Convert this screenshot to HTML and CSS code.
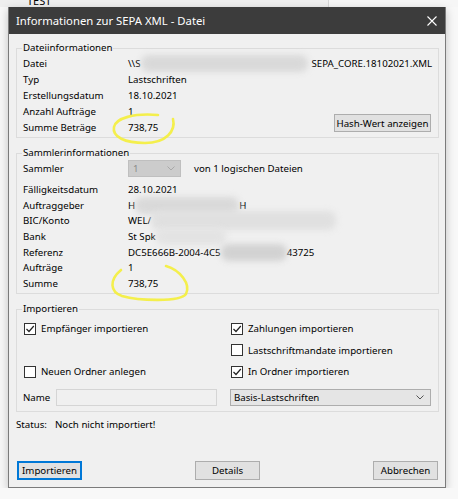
FILE: index.html
```html
<!DOCTYPE html>
<html lang="de">
<head>
  <meta charset="UTF-8">
  <title>Informationen zur SEPA XML - Datei</title>
  <link rel="stylesheet" href="styles.css">
</head>
<body>
  <div class="behind"><span class="behind-text">TEST</span></div>

  <div class="dialog">
    <div class="titlebar">
      <span class="title">Informationen zur SEPA XML - Datei</span>
      <svg class="close" width="10" height="10" viewBox="0 0 10 10">
        <path d="M0.5 0.5 L9.5 9.5 M9.5 0.5 L0.5 9.5" stroke="#fff" stroke-width="1.1" fill="none"/>
      </svg>
    </div>

    <div class="dialog-body">
      <fieldset class="group">
        <legend>Dateiinformationen</legend>
        <div class="info info-file">
          <span class="key">Datei</span>
          <span class="val val-wide">\\S<span class="smudge smudge-file"></span>SEPA_CORE.18102021.XML</span>
          <span class="key">Typ</span>
          <span class="val">Lastschriften</span>
          <span class="key">Erstellungsdatum</span>
          <span class="val">18.10.2021</span>
          <span class="key">Anzahl Aufträge</span>
          <span class="val">1</span>
          <span class="key">Summe Beträge</span>
          <span class="val">738,75</span>
          <button class="btn btn-hash">Hash-Wert anzeigen</button>
        </div>
      </fieldset>

      <fieldset class="group">
        <legend>Sammlerinformationen</legend>
        <div class="sammler-row">
          <span class="key">Sammler</span>
          <span class="combo combo-disabled">1<svg class="chev" width="8" height="5" viewBox="0 0 8 5"><path d="M0.5 0.5 L4 4 L7.5 0.5" stroke="#a8a8a8" fill="none"/></svg></span>
          <span class="of-files">von 1 logischen Dateien</span>
        </div>
        <div class="info info-batch">
          <span class="key">Fälligkeitsdatum</span>
          <span class="val">28.10.2021</span>
          <span class="key">Auftraggeber</span>
          <span class="val">H<span class="smudge smudge-name"></span>H</span>
          <span class="key">BIC/Konto</span>
          <span class="val">WEL/<span class="smudge smudge-bic"></span></span>
          <span class="key">Bank</span>
          <span class="val">St Spk<span class="smudge smudge-bank"></span></span>
          <span class="key">Referenz</span>
          <span class="val">DC5E666B-2004-4C5<span class="smudge smudge-ref"></span>43725</span>
          <span class="key">Aufträge</span>
          <span class="val">1</span>
          <span class="key">Summe</span>
          <span class="val">738,75</span>
        </div>
      </fieldset>

      <fieldset class="group">
        <legend>Importieren</legend>
        <div class="import-grid">
          <label class="check"><span class="box checked"></span>Empfänger importieren</label>
          <label class="check check-right"><span class="box checked"></span>Zahlungen importieren</label>
          <div></div>
          <label class="check check-right"><span class="box"></span>Lastschriftmandate importieren</label>
          <label class="check"><span class="box"></span>Neuen Ordner anlegen</label>
          <label class="check check-right"><span class="box checked"></span>In Ordner importieren</label>
          <div class="name-row">
            <span class="name-label">Name</span>
            <span class="name-input"></span>
          </div>
          <div class="select">Basis-Lastschriften<svg class="chev" width="8" height="5" viewBox="0 0 8 5"><path d="M0.5 0.5 L4 4 L7.5 0.5" stroke="#555" fill="none"/></svg></div>
        </div>
      </fieldset>

      <div class="status"><span class="status-label">Status:</span>Noch nicht importiert!</div>

      <div class="buttons">
        <button class="btn btn-default">Importieren</button>
        <button class="btn">Details</button>
        <button class="btn">Abbrechen</button>
      </div>
    </div>
  </div>

  <!-- yellow marker circles drawn over the screenshot -->
  <svg class="marks" width="458" height="499" viewBox="0 0 458 499">
    <path d="M173 119 C176 131 166 143 145 143 C125 143 112 137 114 127 C116 118 134 113 158 115" />
    <path d="M166 266 C180 270 191 284 186 294 C180 302 140 301 122 296 C110 292 109 280 121 270" />
  </svg>
</body>
</html>
```

FILE: styles.css
```css
body {
  margin: 0;
  position: relative;
  background: #f8f8f8;
  font-family: "Noto Sans", sans-serif;
  font-size: 9.7px;
  color: #000;
}
.behind {
  height: 7px;
  overflow: hidden;
  padding-left: 27px;
  background: linear-gradient(to right, #efefef 328px, #d6d6d6 328px, #d6d6d6 329px, #f6f6f6 329px);
}
.behind-text {
  display: block;
  margin-top: -5px;
  font-size: 11px;
  line-height: 12px;
}
.dialog {
  width: 436px;
  margin-left: 8px;
  border: 1px solid #7b7b7b;
  border-top: 0;
  background: #f0f0f0;
  box-shadow: 0 3px 9px rgba(0, 0, 0, 0.22);
}
.titlebar {
  height: 27px;
  display: flex;
  align-items: center;
  justify-content: space-between;
  padding-left: 7px;
  background: #3c3c3c;
  color: #fff;
  font-size: 11.3px;
}
.close {
  margin-right: 8px;
}
.dialog-body {
  padding: 0 6px 7px 7px;
}
.group {
  margin: 9px 0 0;
  padding: 1px 6px 2px 6px;
  border: 1px solid #dcdcdc;
  min-width: 0;
}
.group:first-child {
  margin-top: 8px;
}
.group legend {
  padding: 0 1px;
  margin-left: -1px;
  line-height: 12px;
}
.info {
  display: grid;
  grid-template-columns: 105px 1fr auto;
  grid-auto-rows: 16px;
  align-items: center;
  white-space: nowrap;
}
.info .key {
  grid-column: 1;
}
.info .val {
  grid-column: 2;
  display: flex;
  align-items: center;
}
.info .val-wide {
  grid-column: 2 / span 2;
}
.info-batch {
  grid-auto-rows: 15.6px;
  grid-template-columns: 105px 1fr;
}
.btn {
  height: 19px;
  padding: 0;
  border: 1px solid #adadad;
  background: #e1e1e1;
  font-family: inherit;
  font-size: 9.7px;
  color: #000;
}
.btn-hash {
  grid-column: 3;
  grid-row: 4 / span 2;
  align-self: end;
  width: 97px;
  height: 18px;
  margin: 0 1px 3px 0;
}
.smudge {
  display: inline-block;
  height: 17px;
  background: #d9d9d9;
  border-radius: 8px;
  filter: blur(3px);
}
.smudge-file {
  width: 172px;
  margin-right: 3px;
}
.smudge-name {
  width: 104px;
}
.smudge-bic {
  width: 185px;
  height: 19px;
  background: #e0e0e0;
}
.smudge-bank {
  width: 70px;
  background: #e3e3e3;
}
.smudge-ref {
  width: 66px;
  background: #d2d2d2;
}
.sammler-row {
  display: flex;
  align-items: center;
  height: 17px;
  margin-bottom: 5px;
}
.sammler-row .key {
  width: 105px;
}
.combo {
  width: 53px;
  height: 17px;
  box-sizing: border-box;
  display: flex;
  align-items: center;
  justify-content: space-between;
  padding: 0 5px 0 4px;
}
.combo-disabled {
  background: #cccccc;
  border: 1px solid #bfbfbf;
  color: #8a8a8a;
}
.of-files {
  margin-left: 13px;
}
.import-grid {
  display: grid;
  grid-template-columns: 207px 1fr;
  grid-template-rows: 21px 22px 21px 24px;
  margin-top: 2px;
  padding-bottom: 3px;
}
.check {
  display: flex;
  align-items: center;
  gap: 5px;
  padding-left: 1px;
}
.box {
  width: 12px;
  height: 12px;
  box-sizing: border-box;
  border: 1px solid #333;
  background: #fff;
}
.box.checked {
  background: #fff url("data:image/svg+xml,%3Csvg xmlns='http://www.w3.org/2000/svg' width='10' height='10'%3E%3Cpath d='M1.5 5 L4 7.5 L8.8 2' stroke='%23222' stroke-width='1.2' fill='none'/%3E%3C/svg%3E") center no-repeat;
}
.name-row {
  align-self: end;
  display: flex;
  align-items: center;
  height: 17px;
}
.name-label {
  width: 33px;
}
.name-input {
  width: 161px;
  height: 17px;
  box-sizing: border-box;
  border: 1px solid #d5d5d5;
  background: #f0f0f0;
}
.select {
  align-self: end;
  width: 201px;
  height: 17px;
  box-sizing: border-box;
  display: flex;
  align-items: center;
  justify-content: space-between;
  padding: 0 6px 0 3px;
  border: 1px solid #adadad;
  background: #e5e5e5;
}
.status {
  margin-top: 6px;
  line-height: 14px;
}
.status-label {
  display: inline-block;
  width: 39px;
}
.buttons {
  display: flex;
  justify-content: space-between;
  margin-top: 29px;
  padding: 0 1px;
}
.buttons .btn {
  width: 65px;
}
.btn-default {
  border-color: #0078d7;
  box-shadow: inset 0 0 0 1px #0078d7;
}
.marks {
  position: absolute;
  left: 0;
  top: 0;
  pointer-events: none;
}
.marks path {
  fill: none;
  stroke: #f4ee3a;
  stroke-width: 2.6;
  stroke-linecap: round;
  opacity: 0.9;
}
```
